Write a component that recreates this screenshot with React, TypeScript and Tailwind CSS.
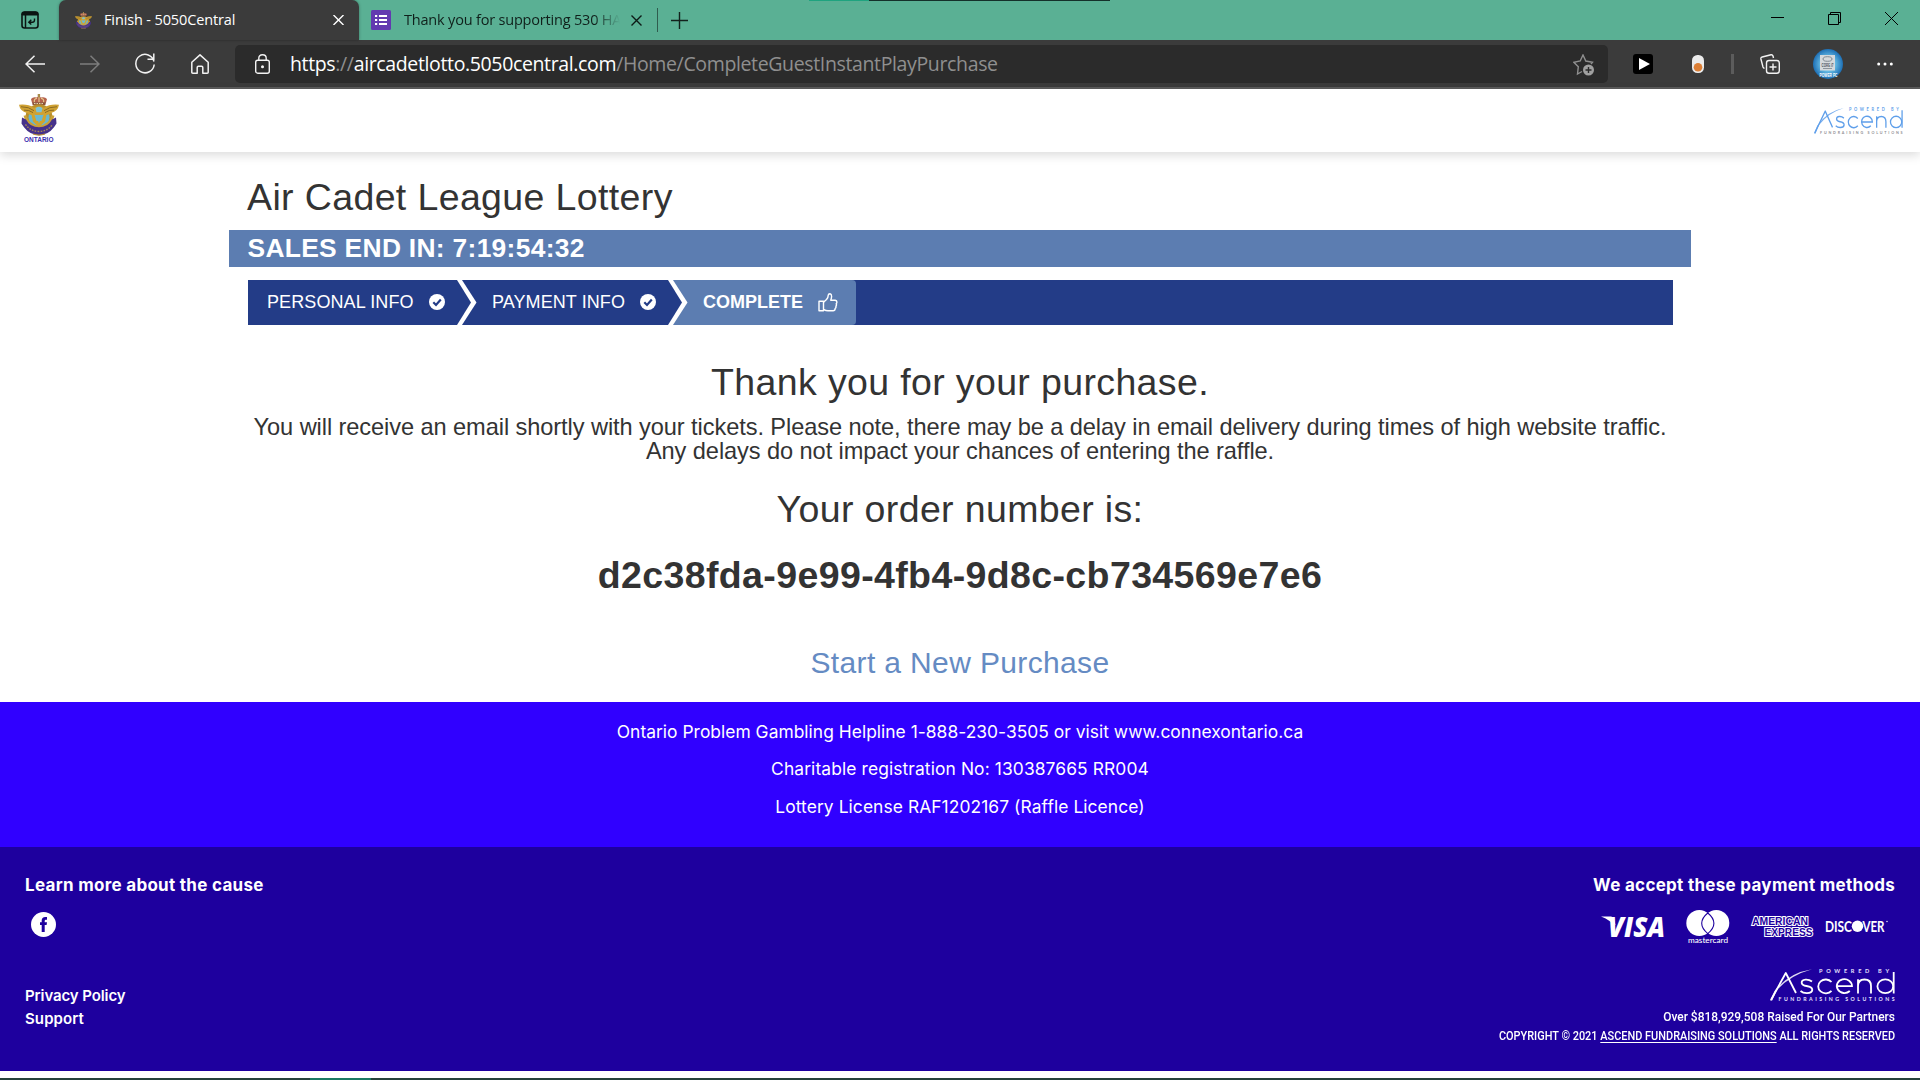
import React from "react";

function Crest({ className, label = false }: { className: string; label?: boolean }) {
  return (
    <svg className={className} viewBox={label ? "0 0 40 50" : "0 0 40 43"} preserveAspectRatio="none">
      <path d="M13 9 L12 5 Q14 2.500 17.500 3.500 L19.700 2.500 L22 3.500 Q26 2.500 28 5 L27 9Z" fill="#b5624c" />
      <path d="M15.500 8.500 Q14.500 5 18 4.500 M24.500 8.500 Q25.500 5 22 4.500 M20 9V3" stroke="#e4c68a" strokeWidth="1.200" fill="none" />
      <path d="M18.700 0h2.400v3.500h-2.400z" fill="#a88a4a" />
      <path d="M13 8.500h14l-.7 3H13.700z" fill="#8c5238" />
      <path d="M15 9.800h10" stroke="#f1e2c0" strokeWidth="1" strokeDasharray="1.500 1" />
      <circle cx="20" cy="24" r="13.500" fill="#b98f2c" />
      <circle cx="20" cy="24" r="10.500" fill="#69b7cf" />
      <path d="M0 11 Q9 10 15 14 Q20 11.500 25 14 Q31 10 40 11 Q39 17.500 32 19.500 Q29 22.500 24.500 21 L20 23 L15.500 21 Q11 22.500 8 19.500 Q1 17.500 0 11Z" fill="#cfa133" />
      <path d="M2 13 Q10 13 15 17 M5 16.500 Q10 16 14 19 M38 13 Q30 13 25 17 M35 16.500 Q30 16 26 19" stroke="#8a6a22" strokeWidth="1" fill="none" />
      <path d="M16.500 14.500 Q20 11.500 23.500 14.500 L22.500 18.500h-5z" fill="#7cc3d6" />
      <path d="M12 19 L17 22 L20 30 L23 22 L28 19 L26 28 L20 34 L14 28Z" fill="#d3a42c" />
      <path d="M15.500 21.500h9l-2 6h-5z" fill="#69b9d3" />
      <path d="M6 22 Q8 32 20 34 Q32 32 34 22" stroke="#caa037" strokeWidth="3" fill="none" />
      <path d="M3 24 L7 26 Q11 34 20 34 Q29 34 33 26 L37 24 L37.500 30 L35 34 Q29 42 20 42 Q11 42 5 34 L2.500 30Z" fill="#46318a" />
      <path d="M6.500 31 Q11 38 20 38.300 Q29 38 33.500 31" stroke="#a98a55" strokeWidth="1.400" strokeDasharray="1.600 1.300" fill="none" />
      <path d="M14 40.800 Q20 43 26 40.800" stroke="#b78d35" strokeWidth="1.200" fill="none" />
      {label && (
        <text x="5" y="49" textLength="29.500" lengthAdjust="spacingAndGlyphs" fontSize="6.800" fontWeight="bold" fill="#3b2fb0" fontFamily="Liberation Sans, sans-serif">ONTARIO</text>
      )}
    </svg>
  );
}

function AscendLogo({ className, main, top, sub }: { className: string; main: string; top: string; sub: string }) {
  return (
    <svg className={className} viewBox="0 0 125 33" preserveAspectRatio="none" overflow="visible" fontFamily="Lato, sans-serif">
      <text x="49" y="5" textLength="70" fontSize="5.600" fontWeight="bold" fill={top}>POWERED BY</text>
      <path d="M1 32 L15.800 5 L26 25" stroke={main} strokeWidth="1.800" fill="none" strokeLinejoin="round" />
      <path d="M0 32.500 L4.500 23 Q18 5 42 1.200 Q20 7.300 7 22 L2.200 32.500Z" fill={main} fillOpacity="0.850" />
      <g stroke={main} strokeWidth="1.800" fill="none">
        <path d="M42 13.500 Q39 11.300 35.500 11.600 Q31.500 12 31.700 14.800 Q32 17.300 36.500 18 Q42.300 18.800 42.300 21.900 Q42 25 37 25.100 Q33 25.200 30.500 23" />
        <path d="M61.500 14 A7.500 6.900 0 1 0 61.500 22.800" />
        <path d="M66.500 18.200 H82 A7.600 6.900 0 1 0 79.800 23" />
        <path d="M88 25.500 V11.200 M88 18 Q88 11.500 94.500 11.500 Q101 11.500 101 18 V25.500" />
        <ellipse cx="115.300" cy="18.300" rx="7.900" ry="6.900" />
        <path d="M123.700 4 V25.500" />
      </g>
      <text x="8.500" y="32.500" textLength="116" fontSize="5.200" fontWeight="bold" fill={sub}>FUNDRAISING SOLUTIONS</text>
    </svg>
  );
}

function TitleBar() {
  return (
    <div className="relative flex h-10 items-stretch bg-[#5ab094] font-['Open_Sans',sans-serif] text-[14.5px]">
      <div className="absolute left-[809px] top-0 h-px w-[60px] bg-[#1fa37f]" />
      <div className="absolute left-[869px] top-0 h-px w-[241px] bg-[#14302a]" />
      <div className="flex w-[59px] items-center pl-[21px]">
        <svg className="h-[18px] w-[18px]" viewBox="0 0 18 18" fill="none" stroke="#0b1512">
          <rect x="1" y="1" width="16" height="16" rx="2.500" strokeWidth="1.600" />
          <path d="M1 4V3.500Q1 1 3.500 1H14.500Q17 1 17 3.500V4Z" fill="#0b1512" />
          <path d="M4.500 4V17" strokeWidth="1.500" />
          <path d="M13.500 7.500V9Q13.500 11.200 11.300 11.200H8M10.300 8.800L7.800 11.200L10.300 13.600" strokeWidth="1.400" />
        </svg>
      </div>
      <div className="flex w-[300px] items-center rounded-t-[7px] bg-[#3b3b3b] pl-4 pr-[15px] text-white shadow-[0_0_3px_rgba(0,0,0,0.35)]">
        <Crest className="h-[17px] w-[17px]" />
        <span className="ml-[12px] flex-1 whitespace-nowrap tracking-[-0.13px]">Finish - 5050Central</span>
        <svg className="h-[10px] w-[11px]" viewBox="0 0 11 10" stroke="#fff" strokeWidth="1.400"><path d="M0.500 0L10.500 10M10.500 0L0.500 10" /></svg>
      </div>
      <div className="flex w-[298px] items-center pl-[12px]">
        <svg className="h-5 w-5" viewBox="0 0 20 20">
          <rect width="20" height="20" rx="1.500" fill="#6239b0" />
          <path d="M4 6h2.200M4 10h2.200M4 14h2.200M8 6h8M8 10h8M8 14h8" stroke="#fff" strokeWidth="2" />
        </svg>
        <span className="ml-[13px] w-[216px] overflow-hidden whitespace-nowrap tracking-[-0.19px] text-[#10201b] [mask-image:linear-gradient(to_right,black_88%,transparent)]">Thank you for supporting 530 HA</span>
        <svg className="ml-[11px] h-[11px] w-[11px]" viewBox="0 0 11 11" stroke="#0d1a16" strokeWidth="1.400"><path d="M0.500 0.500L10.500 10.500M10.500 0.500L0.500 10.500" /></svg>
      </div>
      <div className="my-2 w-px bg-[#2f5c4e]" />
      <div className="ml-[13px] flex flex-1 items-center">
        <svg className="h-[17px] w-[17px]" viewBox="0 0 17 17" stroke="#12211c" strokeWidth="1.400"><path d="M8.500 0V17M0 8.500H17" /></svg>
      </div>
      <div className="flex items-center gap-[44px] pb-[3px] pr-[22px]">
        <svg className="h-[13px] w-[13px]" viewBox="0 0 13 13" stroke="#000"><path d="M0 5.500H13" /></svg>
        <svg className="h-[13px] w-[13px]" viewBox="0 0 13 13" fill="none" stroke="#000"><path d="M0.500 2.500H10.500V12.500H0.500ZM2.500 2.500V0.500H12.500V10.500H10.500" /></svg>
        <svg className="h-[13px] w-[13px]" viewBox="0 0 13 13" stroke="#000"><path d="M0 0L13 13M13 0L0 13" /></svg>
      </div>
    </div>
  );
}

function Toolbar() {
  return (
    <div className="flex h-[49px] items-center border-b-2 border-[#5c5c5c] bg-[#3b3b3b] pl-[25px] pr-[27px]">
      <svg className="h-[18px] w-5" viewBox="0 0 20 18" fill="none" stroke="#f2f2f2" strokeWidth="1.500"><path d="M20 9H1M9.500 0.700L1 9L9.500 17.300" /></svg>
      <svg className="ml-[35px] h-[18px] w-5" viewBox="0 0 20 18" fill="none" stroke="#7d7d7d" strokeWidth="1.500"><path d="M0 9H19M10.500 0.700L19 9L10.500 17.300" /></svg>
      <svg className="ml-[35px] h-[21px] w-5" viewBox="0 0 20 21" fill="none" stroke="#f2f2f2" strokeWidth="1.500"><path d="M19 8.500A9.200 9.200 0 1 0 19.200 11.500M12.500 6.300H18.800V0.500" /></svg>
      <svg className="ml-[36px] h-[20px] w-[18px]" viewBox="0 0 18 20" fill="none" stroke="#f2f2f2" strokeWidth="1.500" strokeLinejoin="round"><path d="M0.800 8.300L9 0.900L17.200 8.300V18.200Q17.200 19.200 16.200 19.200H11.800V13.500Q11.800 12.300 10.600 12.300H7.400Q6.200 12.300 6.200 13.500V19.200H1.800Q0.800 19.200 0.800 18.200Z" /></svg>
      <div className="ml-[26px] flex h-[38px] w-[1373px] items-center rounded-[5px] bg-[#2b2b2b] pl-5 pr-[13px]">
        <svg className="h-5 w-[15px]" viewBox="0 0 15 20" fill="none" stroke="#f2f2f2" strokeWidth="1.400"><rect x="0.700" y="6.200" width="13.600" height="13" rx="2" /><path d="M3.800 6V4.300Q3.800 0.800 7.500 0.800Q11.200 0.800 11.200 4.300V6" /><circle cx="7.500" cy="12.800" r="0.800" fill="#f2f2f2" /></svg>
        <span className="ml-5 flex-1 whitespace-nowrap pt-px font-['Open_Sans',sans-serif] text-[19.5px] tracking-[-0.36px] text-[#8f8f8f]">
          <span className="text-white">https</span>://<span className="text-white">aircadetlotto.5050central.com</span>/Home/CompleteGuestInstantPlayPurchase
        </span>
        <svg className="mt-[2px] h-[22px] w-[22px]" viewBox="0 0 22 22" fill="none">
          <path d="M9 17.500L4.500 20L5.300 12.800L0.800 8.200L7.200 7L10 1L12.800 7L19.500 8.200L18 10" stroke="#8f8f8f" strokeWidth="1.400" />
          <circle cx="15.500" cy="16" r="5.500" fill="#a0a0a0" />
          <path d="M15.500 13V19M12.500 16H18.500" stroke="#2b2b2b" strokeWidth="1.400" />
        </svg>
      </div>
      <svg className="ml-[25px] h-5 w-5" viewBox="0 0 20 20"><rect width="20" height="20" rx="3" fill="#000" /><path d="M6 4V16L17 10Z" fill="#fff" /></svg>
      <svg className="ml-[39px] h-[18px] w-3" viewBox="0 0 12 18"><rect width="12" height="18" rx="5.500" fill="#ececec" /><circle cx="6" cy="12.300" r="4.300" fill="#dd7f35" /></svg>
      <div className="ml-[27px] h-5 w-[3px] bg-[#5c5c5c]" />
      <svg className="ml-[26px] h-5 w-5" viewBox="0 0 20 20" fill="none" stroke="#f2f2f2" strokeWidth="1.400">
        <rect x="6.500" y="6.500" width="12.800" height="12.800" rx="2.500" />
        <path d="M13 9.500V16.500M9.500 13H16.500" />
        <path d="M13.500 4L13 2Q12.500 0.500 11 0.800L2.200 3Q0.600 3.400 0.900 5L3 13Q3.400 14.200 4.500 14.200" />
      </svg>
      <svg className="ml-[33px] h-[30px] w-[30px]" viewBox="0 0 30 30" fontFamily="Liberation Sans, sans-serif" fontWeight="bold">
        <defs>
          <radialGradient id="glow"><stop offset="0.300" stopColor="#7fd4f3" /><stop offset="1" stopColor="#1d6fb5" /></radialGradient>
        </defs>
        <circle cx="15" cy="15" r="15" fill="url(#glow)" />
        <rect x="7" y="6" width="15" height="15.500" fill="#d5d9dc" />
        <ellipse cx="14.500" cy="10" rx="4.500" ry="2.300" fill="none" stroke="#6b7680" strokeWidth="0.800" />
        <text x="8.500" y="17.500" textLength="12" lengthAdjust="spacingAndGlyphs" fontSize="4.500" fill="#4a545c">CORE i7</text>
        <path d="M10 19.500h9" stroke="#8b949b" />
        <text x="6.500" y="27.500" textLength="18" lengthAdjust="spacingAndGlyphs" fontSize="5.500" fill="#fff">POWER PC</text>
      </svg>
      <svg className="ml-auto h-1 w-4" viewBox="0 0 16 4" fill="#fff"><circle cx="1.700" cy="2" r="1.500" /><circle cx="8" cy="2" r="1.500" /><circle cx="14.300" cy="2" r="1.500" /></svg>
    </div>
  );
}

function Check() {
  return (
    <svg className="mb-px h-4 w-4" viewBox="0 0 16 16"><circle cx="8" cy="8" r="8" fill="#fff" /><path d="M4.300 8.300L7 11L11.800 5.600" stroke="#233c87" strokeWidth="2.200" fill="none" /></svg>
  );
}

function Chevron({ after }: { after: string }) {
  return (
    <svg className="h-[45px] w-[20px]" viewBox="0 0 20 45">
      <path d="M0 0H20V45H0Z" fill={after} />
      <path d="M0 0H5L19.500 22.500L5 45H0Z" fill="#fff" />
      <path d="M0 0L14 22.500L0 45Z" fill="#233c87" />
    </svg>
  );
}

function Steps() {
  return (
    <div className="ml-[19px] mt-[13px] flex h-[45px] w-[1425px] items-center bg-[#233c87] pl-[19px] text-lg leading-[42px] text-white">
      <span className="w-[162px] pb-[2px] tracking-[0.1px]">PERSONAL INFO</span>
      <Check />
      <div className="ml-3"><Chevron after="#233c87" /></div>
      <span className="ml-[15px] w-[148px] pb-[2px] tracking-[0.08px]">PAYMENT INFO</span>
      <Check />
      <div className="ml-3"><Chevron after="#5c7db1" /></div>
      <div className="flex h-[45px] items-center rounded-r-[4px] bg-[#5c7db1] pl-[15px] pr-[18px] font-bold">
        <span className="w-[115px] pb-[2px]">COMPLETE</span>
        <svg className="h-[19px] w-[20px]" viewBox="0 0 20 19" fill="none" stroke="#fff" strokeWidth="1.400" strokeLinejoin="round">
          <path d="M1 8.200H5.500V17.800H1Z" />
          <path d="M5.500 9.300L8.500 6.500Q10.300 4.500 10.200 2.200Q10.500 0.700 12 0.800Q13.700 1.200 13.600 3.500Q13.500 5.300 12.700 7.200H17.200Q19 7.500 18.900 9.300Q18.800 10.300 18.200 10.800Q18.900 12 17.900 13.300Q18.300 14.600 17.100 15.500Q17.200 17.600 15 17.800H10Q8 17.700 5.500 16.500" />
        </svg>
      </div>
    </div>
  );
}

function Payments() {
  return (
    <div className="mt-[9px] flex h-9 items-start pr-[6px] text-white">
      <svg className="mt-[9px] h-[22px] w-[64px]" viewBox="0 0 64 22" overflow="visible" fill="#fff" fontFamily="Open Sans, sans-serif">
        <path d="M0 0.500H10Q12.500 0.500 13 3L14.500 9L8.500 5Q5 2 0 0.500Z" />
        <text x="7" y="21" textLength="57" lengthAdjust="spacingAndGlyphs" fontSize="28.500" fontWeight="800" fontStyle="italic">VISA</text>
      </svg>
      <svg className="ml-[21px] mt-[3px] h-[35px] w-[44px]" viewBox="0 0 44 35" overflow="visible">
        <circle cx="13.300" cy="13" r="13" fill="#fff" />
        <circle cx="30.300" cy="13" r="13" fill="#fff" />
        <path d="M21.800 3Q15.700 8 15.700 13.300Q15.700 18.600 21.800 23.600Q27.900 18.600 27.900 13.300Q27.900 8 21.800 3Z" fill="none" stroke="#1e009e" strokeWidth="1.100" />
        <text x="2" y="33" textLength="40" lengthAdjust="spacingAndGlyphs" fontSize="7" fontWeight="500" fill="#fff" fontFamily="Lato, sans-serif">mastercard</text>
      </svg>
      <svg className="ml-[20px] mt-[8px] h-[23px] w-[64px]" viewBox="0 0 64 23" overflow="visible" fill="#1e009e" stroke="#fff" strokeWidth="2" paintOrder="stroke" fontFamily="Liberation Sans, sans-serif" fontWeight="bold" fontSize="10">
        <text x="2" y="9.500" textLength="56" lengthAdjust="spacingAndGlyphs">AMERICAN</text>
        <text x="14.500" y="21" textLength="48" lengthAdjust="spacingAndGlyphs">EXPRESS</text>
      </svg>
      <svg className="ml-[11px] mt-[12px] h-[14px] w-[64px]" viewBox="0 0 64 14" overflow="visible" fill="#fff" fontFamily="Lato, sans-serif" fontWeight="bold" fontSize="14.500">
        <text x="0" y="12.500" textLength="27" lengthAdjust="spacingAndGlyphs">DISC</text>
        <circle cx="32.500" cy="7.200" r="5.700" />
        <text x="37.500" y="12.500" textLength="22" lengthAdjust="spacingAndGlyphs">VER</text>
        <circle cx="62" cy="2.500" r="0.700" />
      </svg>
    </div>
  );
}

function SiteFooter() {
  return (
    <>
      <div className="h-[145px] bg-[#3000ff] pt-[10.5px] text-center font-['Inter',sans-serif] text-[17.4px] leading-[37.6px] text-white">
        <p className="tracking-[0.03px]">Ontario Problem Gambling Helpline 1-888-230-3505 or visit www.connexontario.ca</p>
        <p className="tracking-[0.11px]">Charitable registration No: 130387665 RR004</p>
        <p className="tracking-[0.08px]">Lottery License RAF1202167 (Raffle Licence)</p>
      </div>
      <div className="flex h-[224px] justify-between bg-[#1e009e] pl-[25px] pr-[25px] pt-[25px] font-['Inter',sans-serif] text-white">
        <div>
          <h3 className="text-[17px] font-bold leading-[27px] tracking-[0.29px]">Learn more about the cause</h3>
          <svg className="ml-[6px] mt-[13px] h-[25px] w-[25px]" viewBox="0 0 25 25">
            <circle cx="12.500" cy="12.500" r="12.500" fill="#fff" />
            <path d="M10.700 20V13H9V10.300H10.700V8.600Q10.700 5 14.300 5H16V7.800H14.700Q13.700 7.800 13.700 8.900V10.300H16L15.600 13H13.700V20Z" fill="#1e009e" />
          </svg>
          <div className="mt-[47px] text-[15px] font-semibold leading-[23px]">
            <p className="tracking-[-0.1px]">Privacy Policy</p>
            <p className="tracking-[0.1px]">Support</p>
          </div>
        </div>
        <div className="flex flex-col items-end whitespace-nowrap">
          <h3 className="text-[17px] font-bold leading-[27px] tracking-[0.29px]">We accept these payment methods</h3>
          <div className="-mt-px"><Payments /></div>
          <AscendLogo className="mt-[25px] h-[33px] w-[125px]" main="#fff" top="#e6e0ff" sub="#e6e0ff" />
          <p className="mt-[6px] origin-right scale-x-[0.92] font-['Roboto',sans-serif] text-[13px] font-medium leading-[19px]">Over $818,929,508 Raised For Our Partners</p>
          <p className="origin-right scale-x-[0.841] font-['Roboto',sans-serif] text-[13px] font-medium leading-[19px]">
            COPYRIGHT © 2021 <a className="underline underline-offset-2">ASCEND FUNDRAISING SOLUTIONS</a> ALL RIGHTS RESERVED
          </p>
        </div>
      </div>
    </>
  );
}

export default function App() {
  return (
    <div className="flex h-[1080px] w-[1920px] flex-col overflow-hidden bg-white font-['Liberation_Sans',Arial,sans-serif]">
      <TitleBar />
      <Toolbar />
      <header className="flex h-[63px] items-center justify-between bg-white pl-[19px] pr-[17px] shadow-[0_3px_10px_rgba(0,0,0,0.15)]">
        <Crest className="mb-[4px] h-[49px] w-[40px]" label />
        <AscendLogo className="h-[27px] w-[89px]" main="#5f9fea" top="#5f9fea" sub="#8f8f94" />
      </header>
      <main className="flex h-[550px] flex-col px-[229px] text-[#333333]">
        <h1 className="ml-[18px] mt-[21px] text-[37.5px] leading-[49px] tracking-[0.37px]">Air Cadet League Lottery</h1>
        <div className="mt-[8px] h-[37px] bg-[#5c7db1] pl-[18.5px] text-[26.4px] font-bold leading-[36px] tracking-[0.3px] text-white">SALES END IN: 7:19:54:32</div>
        <Steps />
        <div className="flex flex-col items-center whitespace-nowrap text-center">
          <h2 className="mt-[33px] text-[37.5px] leading-[48px] tracking-[0.36px]">Thank you for your purchase.</h2>
          <p className="mt-[9px] text-[23.6px] leading-[24px] tracking-[-0.08px]">
            You will receive an email shortly with your tickets. Please note, there may be a delay in email delivery during times of high website traffic.
            <br />
            Any delays do not impact your chances of entering the raffle.
          </p>
          <h2 className="mt-[22px] text-[37.5px] leading-[49px] tracking-[0.36px]">Your order number is:</h2>
          <h2 className="mt-[17px] text-[37.5px] font-bold leading-[48px] tracking-[0.38px]">d2c38fda-9e99-4fb4-9d8c-cb734569e7e6</h2>
          <a className="mt-[44px] text-[30px] leading-[40px] tracking-[0.36px] text-[#658bc3]">Start a New Purchase</a>
        </div>
      </main>
      <SiteFooter />
      <div className="h-[7px] bg-white" />
      <div className="flex h-[2px] bg-[#26423b]">
        <div className="ml-[310px] w-[61px] bg-[#1a7a62]" />
      </div>
    </div>
  );
}
